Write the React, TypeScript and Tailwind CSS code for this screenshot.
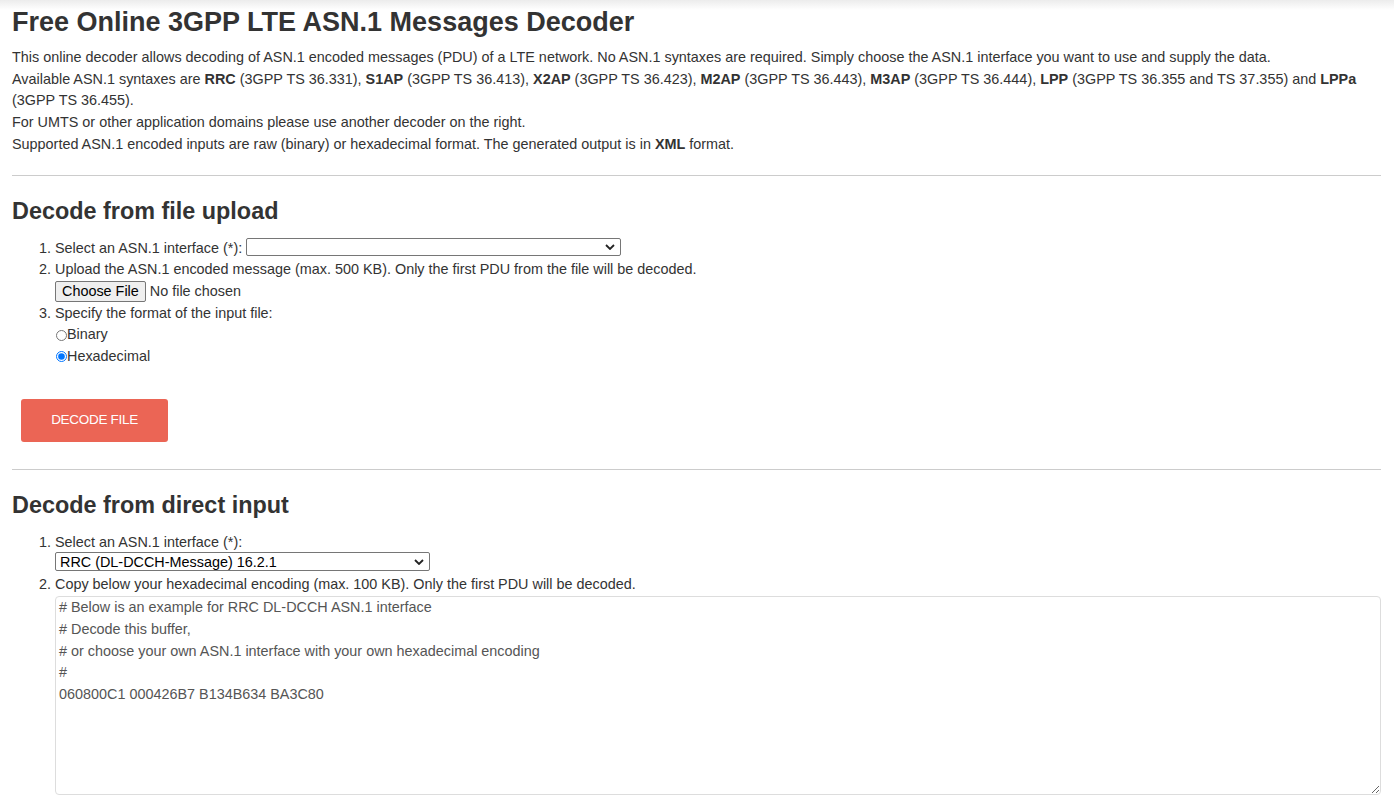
import React from 'react';

const sampleHex = `# Below is an example for RRC DL-DCCH ASN.1 interface
# Decode this buffer,
# or choose your own ASN.1 interface with your own hexadecimal encoding
#
060800C1 000426B7 B134B634 BA3C80`;

function Chevron() {
  return (
    <svg
      viewBox="0 0 10 6"
      className="pointer-events-none absolute right-[6px] top-1/2 h-[6px] w-[10px] -translate-y-1/2"
    >
      <path d="M1 1 L5 5 L9 1" fill="none" stroke="#222" strokeWidth="1.8" />
    </svg>
  );
}

function SelectBox({ value, className }: { value: string; className: string }) {
  return (
    <span className={`relative inline-block align-middle ${className}`}>
      <select
        defaultValue={value}
        className="block h-full w-full appearance-none rounded-[2px] border border-[#767676] bg-white pl-[4px] pr-6 text-[14.4px] leading-[16px] text-black outline-none"
      >
        <option value={value}>{value}</option>
      </select>
      <Chevron />
    </span>
  );
}

function Item({ n, children }: { n: number; children: React.ReactNode }) {
  return (
    <li className="flex">
      <span className="w-[43px] shrink-0 text-right pr-[4px]">{n}.</span>
      <div className="min-w-0 flex-1">{children}</div>
    </li>
  );
}

export default function App() {
  return (
    <div className="relative min-h-screen bg-white font-['Liberation_Sans',Arial,sans-serif] text-[14.4px] leading-[21.7px] text-[#333]">
      <div className="pointer-events-none absolute inset-x-0 top-0 h-[10px] bg-gradient-to-b from-[#ececec] to-white" />
      <div className="relative pl-[12px] pr-[13px] pt-[5px]">
        <h1 className="text-[27px] font-bold leading-[34px] text-[#333]">
          Free Online 3GPP LTE ASN.1 Messages Decoder
        </h1>
        <div className="mt-[8px]">
          <p>
            This online decoder allows decoding of ASN.1 encoded messages (PDU) of a LTE network. No ASN.1 syntaxes
            are required. Simply choose the ASN.1 interface you want to use and supply the data.
          </p>
          <p>
            Available ASN.1 syntaxes are <b>RRC</b> (3GPP TS 36.331), <b>S1AP</b> (3GPP TS 36.413),{' '}
            <b>X2AP</b> (3GPP TS 36.423), <b>M2AP</b> (3GPP TS 36.443), <b>M3AP</b> (3GPP TS 36.444),{' '}
            <b>LPP</b> (3GPP TS 36.355 and TS 37.355) and <b>LPPa</b> (3GPP TS 36.455).
          </p>
          <p>For UMTS or other application domains please use another decoder on the right.</p>
          <p>
            Supported ASN.1 encoded inputs are raw (binary) or hexadecimal format. The generated output is in{' '}
            <b>XML</b> format.
          </p>
        </div>

        <hr className="mt-[19px] border-0 border-t border-[#ccc]" />

        <h2 className="mt-[21px] text-[23.4px] font-bold leading-[28px]">Decode from file upload</h2>
        <ol className="mt-[13px]">
          <Item n={1}>
            Select an ASN.1 interface (*):{' '}
            <SelectBox value="" className="h-[18px] w-[375px] -mt-[3px]" />
          </Item>
          <Item n={2}>
            Upload the ASN.1 encoded message (max. 500 KB). Only the first PDU from the file will be decoded.
            <div className="flex items-center">
              <span className="inline-flex h-[21px] items-center rounded-[2px] border border-[#767676] bg-[#efefef] px-[6px] text-black">
                Choose File
              </span>
              <span className="ml-[4px]">No file chosen</span>
            </div>
          </Item>
          <Item n={3}>
            Specify the format of the input file:
            <label className="flex items-center">
              <input type="radio" name="fmt" className="m-0 ml-[1px] h-[11px] w-[11px]" />
              Binary
            </label>
            <label className="flex items-center">
              <input type="radio" name="fmt" defaultChecked className="m-0 ml-[1px] h-[11px] w-[11px] accent-[#0075ff]" />
              Hexadecimal
            </label>
          </Item>
        </ol>

        <button className="ml-[9px] mt-[31px] block h-[43px] w-[147px] rounded-[3px] bg-[#eb6555] text-[13.5px] tracking-[-0.3px] uppercase text-white">
          Decode file
        </button>

        <hr className="mt-[27px] border-0 border-t border-[#ccc]" />

        <h2 className="mt-[21px] text-[23.4px] font-bold leading-[28px]">Decode from direct input</h2>
        <ol className="mt-[13px]">
          <Item n={1}>
            Select an ASN.1 interface (*):
            <div className="flex h-[21px] items-start">
              <SelectBox value="RRC (DL-DCCH-Message) 16.2.1" className="-mt-[1px] h-[19px] w-[375px]" />
            </div>
          </Item>
          <Item n={2}>
            Copy below your hexadecimal encoding (max. 100 KB). Only the first PDU will be decoded.
            <textarea
              defaultValue={sampleHex}
              className="block h-[199px] w-full resize-y rounded-[4px] border border-[#ddd] px-[3px] py-0 text-[14.4px] leading-[21.7px] text-[#555] outline-none"
            />
          </Item>
        </ol>
      </div>
    </div>
  );
}
